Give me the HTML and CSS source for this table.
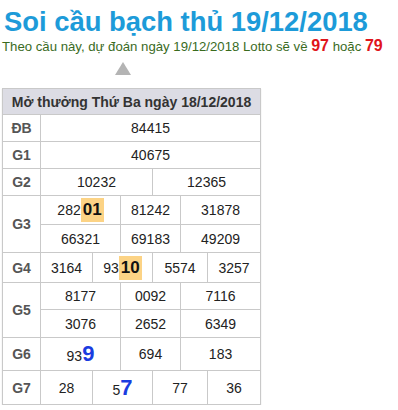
FILE: index.html
```html
<!DOCTYPE html>
<html lang="vi">
<head>
<meta charset="utf-8">
<link rel="stylesheet" href="styles.css">
</head>
<body>
<h1 class="title">Soi cầu bạch thủ 19/12/2018</h1>
<div class="subtitle">Theo cầu này, dự đoán ngày 19/12/2018 Lotto sẽ về <b class="hot">97</b> hoặc <b class="hot">79</b></div>
<div class="pointer"><span class="tri"></span></div>
<table class="kq">
  <colgroup>
    <col class="c-label"><col class="c1"><col class="c2"><col class="c3"><col class="c4"><col class="c5"><col class="c6">
  </colgroup>
  <tr class="r-head"><th colspan="7">Mở thưởng Thứ Ba ngày 18/12/2018</th></tr>
  <tr class="r27"><td class="lbl">ĐB</td><td colspan="6">84415</td></tr>
  <tr class="r27"><td class="lbl">G1</td><td colspan="6">40675</td></tr>
  <tr class="r27"><td class="lbl">G2</td><td colspan="3">10232</td><td colspan="3">12365</td></tr>
  <tr class="r29"><td class="lbl" rowspan="2">G3</td><td colspan="2">282<span class="mark">01</span></td><td colspan="2">81242</td><td colspan="2">31878</td></tr>
  <tr class="r28"><td colspan="2">66321</td><td colspan="2">69183</td><td colspan="2">49209</td></tr>
  <tr class="r30"><td class="lbl">G4</td><td>3164</td><td colspan="2">93<span class="mark">10</span></td><td colspan="2">5574</td><td>3257</td></tr>
  <tr class="r27"><td class="lbl" rowspan="2">G5</td><td colspan="2">8177</td><td colspan="2">0092</td><td colspan="2">7116</td></tr>
  <tr class="r28"><td colspan="2">3076</td><td colspan="2">2652</td><td colspan="2">6349</td></tr>
  <tr class="r33"><td class="lbl">G6</td><td colspan="2">93<span class="big">9</span></td><td colspan="2">694</td><td colspan="2">183</td></tr>
  <tr class="r34"><td class="lbl">G7</td><td>28</td><td colspan="2">5<span class="big">7</span></td><td colspan="2">77</td><td>36</td></tr>
</table>
</body>
</html>
```
FILE: styles.css
```css
html, body {
  margin: 0;
  padding: 0;
  background: #fff;
}
body {
  padding: 0 2px;
  font-family: "Liberation Sans", Arial, sans-serif;
}
.title {
  margin: 0;
  padding: 7px 0 0 2px;
  font-size: 27.4px;
  line-height: 30px;
  font-weight: bold;
  color: #1d9bd9;
}
.subtitle {
  height: 19px;
  font-size: 13.2px;
  line-height: 18px;
  color: #3a6b1e;
  white-space: nowrap;
}
.hot {
  font-size: 16px;
  color: #e0151b;
}
.pointer {
  padding: 6px 0 0 113px;
  height: 13px;
  margin-bottom: 13px;
}
.tri {
  display: block;
  width: 0;
  height: 0;
  border-left: 8px solid transparent;
  border-right: 8px solid transparent;
  border-bottom: 13px solid #b4b4b4;
}
.kq {
  width: 258px;
  border-collapse: collapse;
  table-layout: fixed;
  box-shadow: 0 1px 1px rgba(0, 0, 0, 0.18);
}
.c-label { width: 38px; }
.c1 { width: 52px; }
.c2 { width: 28px; }
.c3 { width: 32px; }
.c4 { width: 28px; }
.c5 { width: 27px; }
.c6 { width: 53px; }
.kq th, .kq td {
  border: 1px solid #c9c9c9;
  padding: 0;
  text-align: center;
  vertical-align: middle;
  white-space: nowrap;
}
.kq th {
  background: #dcdce4;
  color: #333;
  font-size: 14px;
  font-weight: bold;
}
.kq td {
  color: #222;
  font-size: 14px;
}
.kq td.lbl {
  color: #555;
  font-weight: bold;
  font-size: 14px;
}
.r-head { height: 26px; }
.r27 { height: 27px; }
.r28 { height: 28px; }
.r29 { height: 29px; }
.r30 { height: 30px; }
.r33 { height: 33px; }
.r34 { height: 34px; }
.mark {
  display: inline-block;
  padding: 3px 2px 3px 2px;
  line-height: 18px;
  font-size: 17px;
  font-weight: bold;
  color: #111;
  background: #fcd385;
}
.big {
  font-size: 22px;
  font-weight: bold;
  color: #1a3ce0;
}
```
